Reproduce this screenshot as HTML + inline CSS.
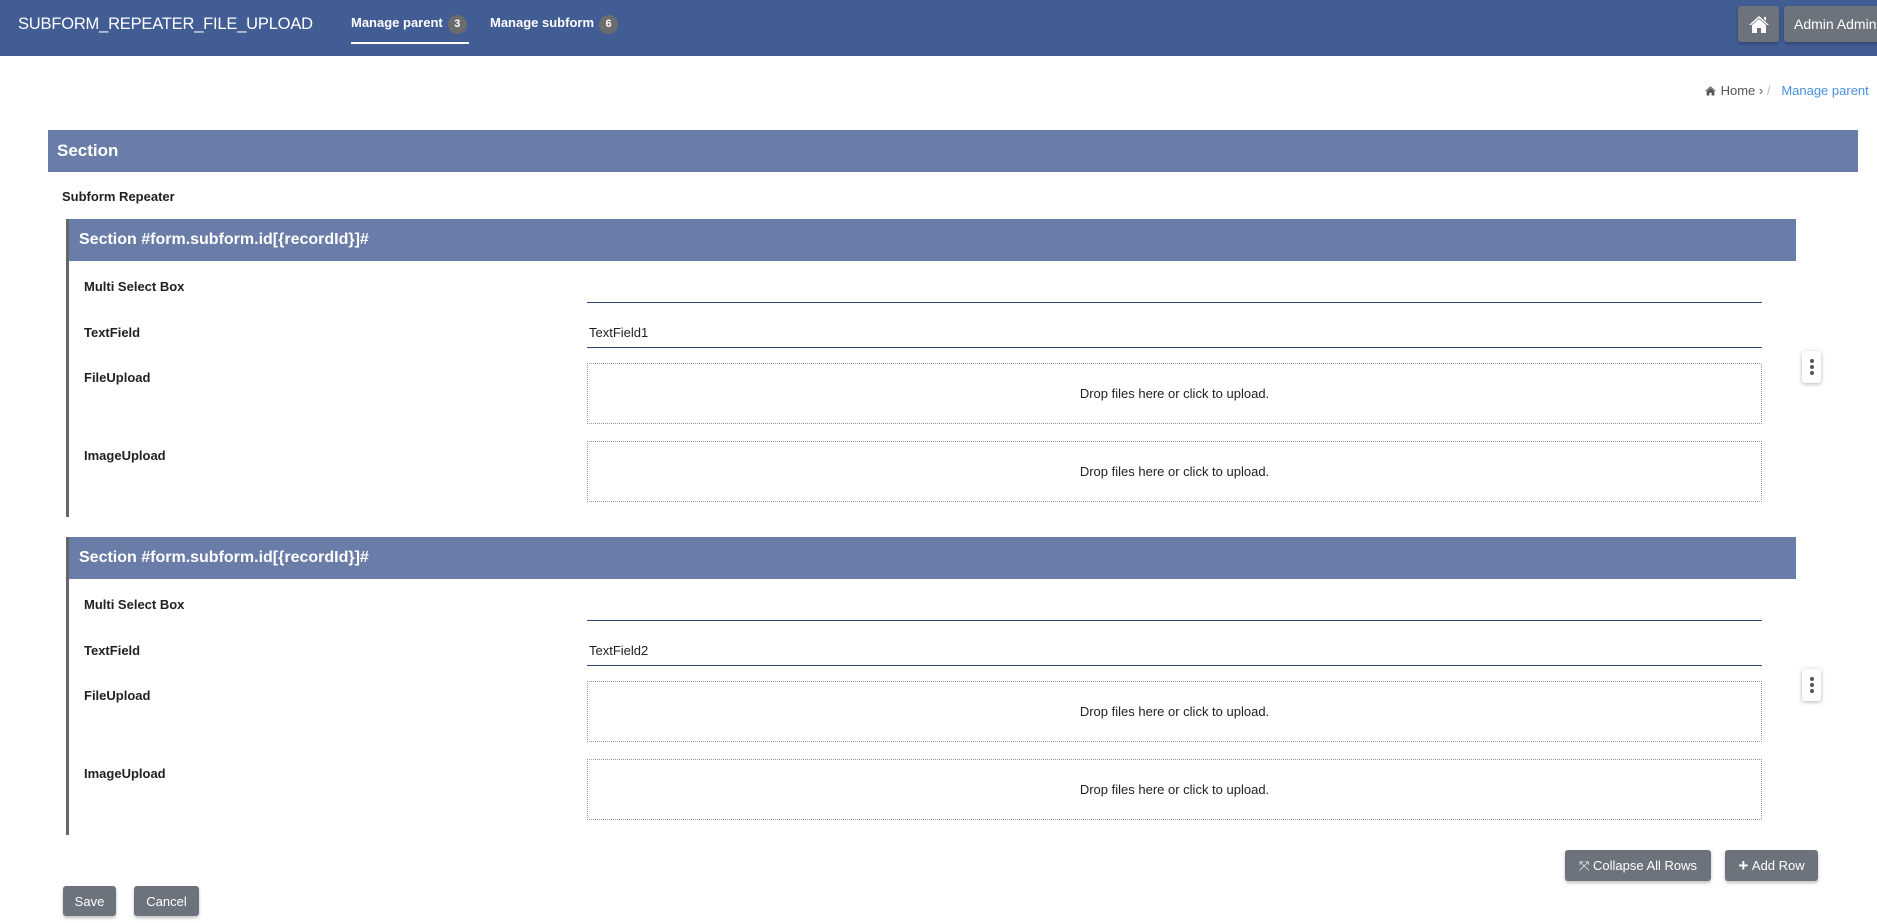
<!DOCTYPE html>
<html><head><meta charset="utf-8"><style>
*{box-sizing:border-box;margin:0;padding:0}
body{width:1877px;height:923px;overflow:hidden;background:#fff;font-family:"Liberation Sans",Arial,sans-serif;position:relative;color:#222}
.abs{position:absolute}
.hdr{left:0;top:0;width:1877px;height:56px;background:#425c94}
.title{left:18px;top:15px;color:#fff;font-size:16.5px;letter-spacing:-0.2px}
.nav{color:#fff;font-weight:bold;font-size:13px;top:15px}
.badge{display:inline-block;background:#6c6c6c;color:#fff;border-radius:10px;font-size:11px;width:19px;height:19px;line-height:19px;text-align:center;margin-left:5px;vertical-align:0}
.btn{background:#6c737c;color:#fff;border-radius:3px;font-size:13px;display:flex;align-items:center;justify-content:center;box-shadow:0 2px 3px rgba(0,0,0,.25)}
.bar{background:#6a7ca8;color:#fff;font-weight:bold;font-size:17px;display:flex;align-items:center}
.sub{font-size:16px}
.lbl{font-weight:bold;font-size:13px;color:#222}
.line{height:1px;background:#33407a;left:587px;width:1175px}
.drop{left:587px;width:1175px;height:61px;border:1px dotted #999;display:flex;align-items:center;justify-content:center;font-size:13px;color:#222}
.keb{width:19px;height:32px;background:#fff;border-radius:3px;box-shadow:0 1px 4px rgba(0,0,0,.3);display:flex;flex-direction:column;align-items:center;justify-content:center;gap:2px}
.keb i{width:4px;height:4px;border-radius:2px;background:#555;display:block}
</style></head><body>
<div class="abs hdr"></div>
<div class="abs title">SUBFORM_REPEATER_FILE_UPLOAD</div>
<div class="abs nav" style="left:351px">Manage parent<span class="badge">3</span></div>
<div class="abs" style="left:351px;top:42px;width:118px;height:2px;background:#fff"></div>
<div class="abs nav" style="left:490px">Manage subform<span class="badge">6</span></div>
<div class="abs btn" style="left:1738px;top:6px;width:41px;height:36px"><svg width="22" height="20" viewBox="0 0 22 20"><path d="M11 2 L1 11 L3 11 L11 4 L19 11 L21 11Z M4 11 L11 5 L18 11 L18 19 L13 19 L13 14 L9 14 L9 19 L4 19Z M16 3 L18 3 L18 7 L16 5Z" fill="#fff"/></svg></div>
<div class="abs btn" style="left:1784px;top:6px;width:100px;height:36px;justify-content:flex-start;padding-left:10px;font-size:14px">Admin Admin</div>
<div class="abs" style="left:1704px;top:83px;font-size:13px;color:#555"><svg width="13" height="11" viewBox="0 0 22 20" style="vertical-align:-1px"><path d="M11 2 L1 11 L3 11 L11 4 L19 11 L21 11Z M4 11 L11 5 L18 11 L18 19 L13 19 L13 14 L9 14 L9 19 L4 19Z" fill="#555"/></svg> Home › <span style="color:#bbb">/</span> &nbsp;&nbsp;<span style="color:#4a90e2">Manage parent</span></div>
<div class="abs bar" style="left:48px;top:130px;width:1810px;height:42px;padding-left:9px">Section</div>
<div class="abs lbl" style="left:62px;top:189px">Subform Repeater</div>

<div class="abs" style="left:66px;top:219px;width:3px;height:298px;background:#666"></div>
<div class="abs bar sub" style="left:69px;top:219px;width:1727px;height:42px;padding-left:10px">Section #form.subform.id[{recordId}]#</div>
<div class="abs lbl" style="left:84px;top:279px">Multi Select Box</div>
<div class="abs line" style="top:302px"></div>
<div class="abs lbl" style="left:84px;top:325px">TextField</div>
<div class="abs" style="left:589px;top:325px;font-size:13px">TextField1</div>
<div class="abs line" style="top:347px"></div>
<div class="abs lbl" style="left:84px;top:370px">FileUpload</div>
<div class="abs drop" style="top:363px">Drop files here or click to upload.</div>
<div class="abs lbl" style="left:84px;top:448px">ImageUpload</div>
<div class="abs drop" style="top:441px">Drop files here or click to upload.</div>
<div class="abs keb" style="left:1802px;top:351px"><i></i><i></i><i></i></div>

<div class="abs" style="left:66px;top:537px;width:3px;height:298px;background:#666"></div>
<div class="abs bar sub" style="left:69px;top:537px;width:1727px;height:42px;padding-left:10px">Section #form.subform.id[{recordId}]#</div>
<div class="abs lbl" style="left:84px;top:597px">Multi Select Box</div>
<div class="abs line" style="top:620px"></div>
<div class="abs lbl" style="left:84px;top:643px">TextField</div>
<div class="abs" style="left:589px;top:643px;font-size:13px">TextField2</div>
<div class="abs line" style="top:665px"></div>
<div class="abs lbl" style="left:84px;top:688px">FileUpload</div>
<div class="abs drop" style="top:681px">Drop files here or click to upload.</div>
<div class="abs lbl" style="left:84px;top:766px">ImageUpload</div>
<div class="abs drop" style="top:759px">Drop files here or click to upload.</div>
<div class="abs keb" style="left:1802px;top:669px"><i></i><i></i><i></i></div>

<div class="abs btn" style="left:1565px;top:850px;width:146px;height:31px">⤧&nbsp;Collapse All Rows</div>
<div class="abs btn" style="left:1725px;top:850px;width:93px;height:31px"><b style="font-size:17px">+</b>&nbsp;Add Row</div>
<div class="abs btn" style="left:63px;top:886px;width:53px;height:30px">Save</div>
<div class="abs btn" style="left:134px;top:886px;width:65px;height:30px">Cancel</div>
</body></html>
